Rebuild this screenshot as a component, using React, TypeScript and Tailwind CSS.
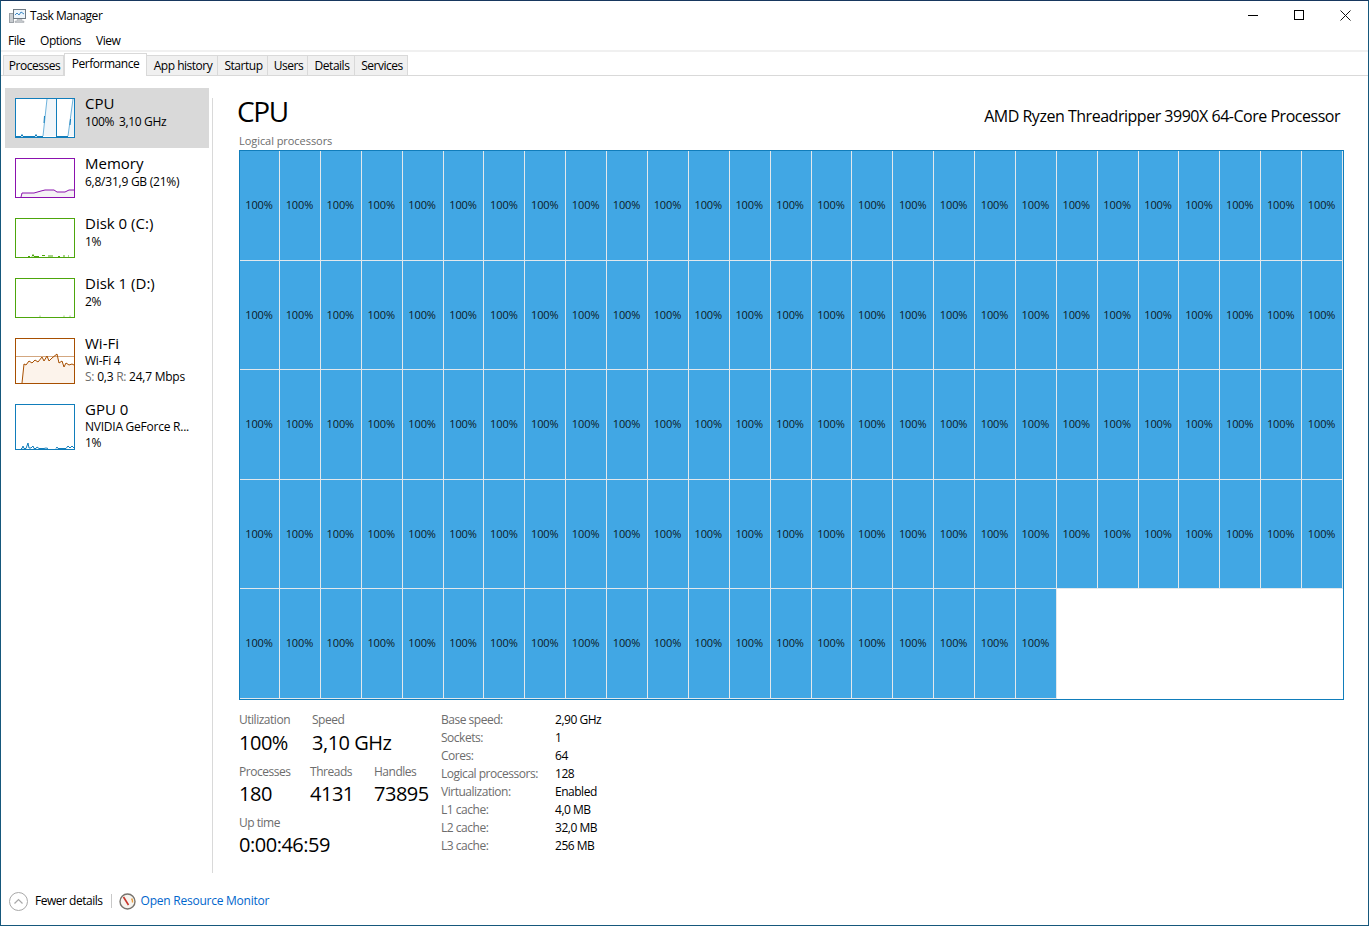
import React from 'react';

const tabs = [
  { label: 'Processes', w: 'w-[61px] border-l' },
  { label: 'Performance', w: 'w-[83px]', active: true },
  { label: 'App history', w: 'w-[71px]' },
  { label: 'Startup', w: 'w-[50px]' },
  { label: 'Users', w: 'w-[40px]' },
  { label: 'Details', w: 'w-[47px]' },
  { label: 'Services', w: 'w-[53px]' },
];

const specs = [
  ['Base speed:', '2,90 GHz'],
  ['Sockets:', '1'],
  ['Cores:', '64'],
  ['Logical processors:', '128'],
  ['Virtualization:', 'Enabled'],
  ['L1 cache:', '4,0 MB'],
  ['L2 cache:', '32,0 MB'],
  ['L3 cache:', '256 MB'],
];

const Graph = ({ border, tall, children }: { border: string; tall?: boolean; children: React.ReactNode }) => (
  <div className={`${border} ${tall ? 'h-[46px]' : 'h-[40px]'} w-[60px] shrink-0 border bg-white`}>
    <svg width="58" height={tall ? 44 : 38} viewBox={`0 0 58 ${tall ? 44 : 38}`} className="block">
      {children}
    </svg>
  </div>
);

const SideItem = ({ title, active, tall, graph, children }: { title: string; active?: boolean; tall?: boolean; graph: React.ReactNode; children: React.ReactNode }) => (
  <div className={`${active ? 'bg-[#d9d9d9]' : ''} ${tall ? 'h-[66px]' : 'h-[60px]'} flex w-[204px] pl-[10px] pt-[10px]`}>
    {graph}
    <div className="ml-[10px] min-w-0">
      <div className={`${tall ? 'h-[20px]' : 'h-[21px]'} mt-[-5px] text-[15px] leading-[20px] tracking-normal text-black`}>{title}</div>
      {children}
    </div>
  </div>
);

const Sub = ({ children }: { children: React.ReactNode }) => (
  <div className="h-[16px] whitespace-nowrap text-[12px] leading-[16px] tracking-[-0.02em] text-black">{children}</div>
);

const Stat = ({ label, value, className, drop }: { label: string; value: string; className: string; drop?: boolean }) => (
  <div className={className}>
    <div className="h-[16px] text-[12px] leading-[16px] text-[#6d6d6d]">{label}</div>
    <div className={`${drop ? 'mt-[1px]' : ''} h-[28px] whitespace-nowrap text-[20px] leading-[28px] text-black`}>{value}</div>
  </div>
);

const TaskIcon = () => (
  <svg width="17" height="16" viewBox="0 0 17 16">
    <rect x="0.5" y="5.5" width="4" height="9" fill="#c9cdd1" stroke="#9aa0a6" />
    <rect x="4.5" y="1.5" width="12" height="9" fill="#eef5fb" stroke="#6f7a84" />
    <path d="M6 7l2-2 2 2 2-3 3 2" fill="none" stroke="#3f8ac6" />
    <path d="M8 11.5h5v1.5h2v1.5H6V13h2Z" fill="#c4c8cc" stroke="#a0a5aa" strokeWidth="0.5" />
  </svg>
);

const MonitorIcon = () => (
  <svg width="17" height="17" viewBox="0 0 17 17">
    <circle cx="8.5" cy="8.5" r="7.5" fill="#f7f4ef" stroke="#77736d" strokeWidth="1.4" />
    <path d="M12.6 5.5a5.5 5.5 0 0 1 .9 4" fill="none" stroke="#e69a3c" strokeWidth="1.4" />
    <path d="M4.5 4l5 8" stroke="#c8352b" strokeWidth="1.6" />
  </svg>
);

export default function App() {
  return (
    <div className="h-[926px] w-[1369px] overflow-hidden border border-[#16587c] border-t-[#17375e] bg-white font-['Open_Sans',sans-serif] tracking-[-0.03em]">
      {/* title bar */}
      <div className="flex h-[30px] items-center pl-[8px]">
        <TaskIcon />
        <span className="ml-[4px] text-[12px] text-black">Task Manager</span>
        <div className="ml-auto flex items-center pb-[2px]">
          <div className="mr-[36px] h-px w-[10px] bg-black" />
          <div className="mr-[36px] h-[10px] w-[10px] border border-black" />
          <svg width="11" height="11" viewBox="0 0 11 11" className="mr-[17px]">
            <path d="M0.5 0.5l10 10M10.5 0.5l-10 10" stroke="#111" fill="none" />
          </svg>
        </div>
      </div>

      {/* menu */}
      <div className="flex h-[19px] items-center gap-[15px] pl-[7px] text-[12px] text-black">
        <span>File</span>
        <span>Options</span>
        <span>View</span>
      </div>
      <div className="h-[2px] bg-[#f0f0f0]" />

      {/* tabs */}
      <div className="flex h-[24px] items-end border-b border-[#d9d9d9] pl-[2px]">
        {tabs.map((tab) => (
          <div
            key={tab.label}
            className={
              tab.active
                ? `${tab.w} relative mb-[-1px] flex h-[23px] shrink-0 justify-center border border-b-0 border-[#d9d9d9] bg-white pt-[1px] text-[12px] text-black`
                : `${tab.w} flex h-[20px] shrink-0 items-center justify-center border-r border-t border-[#d9d9d9] bg-[#f0f0f0] pl-[2px] text-[12px] text-black`
            }
          >
            {tab.label}
          </div>
        ))}
      </div>

      <div className="flex h-[805px]">
        {/* sidebar */}
        <div className="w-[211px] shrink-0 pl-[4px] pt-[12px]">
          <SideItem
            title="CPU"
            active
            graph={
              <Graph border="border-[#117dbb]">
                <path d="M27 37L31 0H40V37Z" fill="#f1f6fa" />
                <path d="M52 37L57 0H58V37Z" fill="#f1f6fa" />
                <path d="M0 37.5H5L6 35.5L7 37.5H19L20 35.5L21 37.5H27M41 37.5H52" fill="none" stroke="#117dbb" />
                <path d="M27 37L31 0M52 37L57 0" fill="none" stroke="#6fb3dc" />
                <path d="M40.5 0V38M28.5 17L28 24M54.5 20L54 26" fill="none" stroke="#117dbb" />
              </Graph>
            }
          >
            <Sub>
              <span className="tracking-[-0.03em]">100%</span>
              <span className="ml-[5px] tracking-[-0.03em]">3,10 GHz</span>
            </Sub>
          </SideItem>
          <SideItem
            title="Memory"
            graph={
              <Graph border="border-[#8b12ae]">
                <path d="M5 38L6 34H18L25 32L29 31H38L41 33H49L53 31H58V38Z" fill="#f4f2f4" />
                <path d="M5 38L6 34H18L25 32L29 31H38L41 33H49L53 31H58" fill="none" stroke="#8b12ae" />
              </Graph>
            }
          >
            <Sub>6,8/31,9 GB (21%)</Sub>
          </SideItem>
          <SideItem
            title="Disk 0 (C:)"
            graph={
              <Graph border="border-[#4da60c]">
                <path d="M12 37.5H14M16 37.5L17 35.5L18 37.5H23M26 36.5H29M32 37H37M42 37.5H44M47 37H49M52 37H53" fill="none" stroke="#4da60c" />
              </Graph>
            }
          >
            <Sub>1%</Sub>
          </SideItem>
          <SideItem
            title="Disk 1 (D:)"
            graph={
              <Graph border="border-[#4da60c]">
                <path d="M24 38V36.5M48 38V36.5M54 38V36.5" fill="none" stroke="#9ccf78" />
              </Graph>
            }
          >
            <Sub>2%</Sub>
          </SideItem>
          <SideItem
            title="Wi-Fi"
            tall
            graph={
              <Graph border="border-[#a74f01]" tall>
                <path d="M6 44L8 25L10 26L13 22L16 24L19 21L22 23L26 18L28 22L31 17L33 22L36 19L41 15L43 24L46 22L48 28L50 24L53 26L56 25L58 26V44Z" fill="#fcf3eb" />
                <path d="M0 17.5H58" stroke="#a74f01" strokeOpacity="0.5" fill="none" />
                <path d="M6 44L8 25L10 26L13 22L16 24L19 21L22 23L26 18L28 22L31 17L33 22L36 19L41 15L43 24L46 22L48 28L50 24L53 26L56 25L58 26" fill="none" stroke="#a74f01" />
              </Graph>
            }
          >
            <Sub>Wi-Fi 4</Sub>
            <Sub>
              <span className="text-[#6d6d6d]">S:</span> 0,3 <span className="text-[#6d6d6d]">R:</span> 24,7 Mbps
            </Sub>
          </SideItem>
          <SideItem
            title="GPU 0"
            tall
            graph={
              <Graph border="border-[#117dbb]" tall>
                <path d="M5 43.5H6L7 41L8 43.5H10L12 38L13 43H15L17 41L18 43.5H20L21 42L23 43.5H28L30 43L32 43.5M40 43.5L41 42L42 43.5H50L52 41L54 43L56 41L58 43" fill="none" stroke="#117dbb" />
              </Graph>
            }
          >
            <Sub>NVIDIA GeForce R...</Sub>
            <Sub>1%</Sub>
          </SideItem>
        </div>
        <div className="mt-[22px] h-[775px] w-px shrink-0 bg-[#d9d9d9]" />

        {/* cpu details */}
        <div className="w-[1131px] shrink-0 pl-[26px]">
          <div className="mt-[18px] flex h-[36px] items-center justify-between pr-[4px]">
            <span className="mb-[2px] ml-[-2px] text-[28px] leading-[36px] tracking-[-0.05em] text-black">CPU</span>
            <span className="mt-[7px] text-[16px] text-black">AMD Ryzen Threadripper 3990X 64-Core Processor</span>
          </div>
          <div className="mt-[2px] h-[18px] text-[11px] leading-[18px] tracking-[-0.005em] text-[#6d6d6d]">Logical processors</div>
          <div className="grid h-[550px] w-[1105px] grid-cols-[40px_repeat(26,minmax(0,1fr))] grid-rows-5 border border-[#117dbb]">
            {Array.from({ length: 128 }, (_, i) => (
              <div
                key={i}
                className="flex items-center justify-center border-b border-r border-[#e2e8ec] bg-[#41a7e4] pr-[1px] text-[11px] tracking-[-0.01em] text-[#0b1a26]"
              >
                100%
              </div>
            ))}
          </div>

          <div className="mt-[12px] flex">
            <div className="w-[202px] shrink-0">
              <div className="flex">
                <Stat className="w-[73px]" label="Utilization" value="100%" drop />
                <Stat className="" label="Speed" value="3,10 GHz" drop />
              </div>
              <div className="mt-[7px] flex">
                <Stat className="w-[71px]" label="Processes" value="180" />
                <Stat className="w-[64px]" label="Threads" value="4131" />
                <Stat className="" label="Handles" value="73895" />
              </div>
              <Stat className="mt-[7px]" label="Up time" value="0:00:46:59" />
            </div>
            <div className="grid grid-cols-[114px_auto] auto-rows-[18px] text-[12px] leading-[16px]">
              {specs.map(([k, v]) => (
                <React.Fragment key={k}>
                  <span className="text-[#6d6d6d]">{k}</span>
                  <span className="text-black">{v}</span>
                </React.Fragment>
              ))}
            </div>
          </div>
        </div>
      </div>

      {/* footer */}
      <div className="flex h-[46px] items-start pl-[8px] pt-[1px] text-[12px]">
        <div className="flex h-[38px] items-center">
          <svg width="19" height="19" viewBox="0 0 19 19">
            <circle cx="9.5" cy="9.5" r="9" fill="none" stroke="#a8a8a8" />
            <path d="M5.5 11.5l4-4 4 4" fill="none" stroke="#a8a8a8" strokeWidth="1.2" />
          </svg>
          <span className="ml-[7px] text-black">Fewer details</span>
          <div className="ml-[8px] h-[14px] w-px bg-[#c8c8c8]" />
          <div className="ml-[7px]">
            <MonitorIcon />
          </div>
          <span className="ml-[5px] tracking-[-0.02em] text-[#0066cc]">Open Resource Monitor</span>
        </div>
      </div>
    </div>
  );
}
